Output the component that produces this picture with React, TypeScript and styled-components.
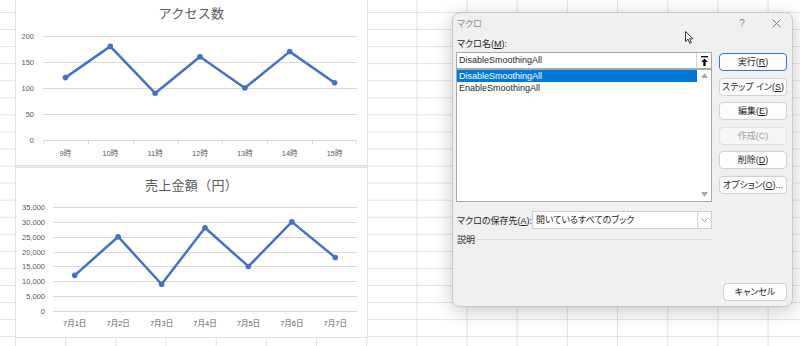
import React from "react";
import styled, { createGlobalStyle } from "styled-components";

const GlobalStyle = createGlobalStyle`
  html, body {
    margin: 0;
    padding: 0;
    background: #fff;
  }
  body {
    font-family: "Liberation Sans", "Noto Sans CJK JP", sans-serif;
  }
`;

const components = {
  Sheet: styled.div`
    position: relative;
    width: 800px;
    height: 346px;
    overflow: hidden;
    display: flex;
    align-items: flex-start;
    background-color: #fff;
    background-image: linear-gradient(to right, #e1e1e1 1px, transparent 1px),
      linear-gradient(to bottom, #e1e1e1 1px, transparent 1px);
    background-size: 50.18px 17.07px;
    background-position: 15px 12px;
  `,
  ChartColumn: styled.div`
    display: flex;
    flex-direction: column;
    gap: 1px;
    width: 353px;
    margin: -1px 0 0 15px;
  `,
  ChartCard: styled.div<{ $height: number }>`
    box-sizing: border-box;
    height: ${p => p.$height}px;
    background: #fff;
    border: 1px solid #e1e1e1;
    display: flex;
    flex-direction: column;
  `,
  ChartTitle: styled.div<{ $height: number }>`
    height: ${p => p.$height}px;
    line-height: ${p => p.$height}px;
    text-align: center;
    font-family: "Noto Sans CJK JP", sans-serif;
    font-size: 13px;
    color: #595959;
    letter-spacing: 0.3px;
  `,
  Plot: styled.svg`
    display: block;
    text {
      font-family: "Liberation Sans", "Noto Sans CJK JP", sans-serif;
      font-size: 7.5px;
      fill: #595959;
    }
  `,
  Dialog: styled.div`
    position: relative;
    box-sizing: border-box;
    width: 341px;
    height: 295px;
    margin: 12px 0 0 84px;
    background: #f0f0f0;
    border: 1px solid #c8c8c8;
    border-radius: 8px;
    box-shadow: 0 4px 18px rgba(0, 0, 0, 0.22);
    display: flex;
    flex-direction: column;
    font-family: "Liberation Sans", "Noto Sans CJK JP", sans-serif;
    font-size: 9px;
    font-feature-settings: "palt";
    color: #1f1f1f;
    white-space: nowrap;
  `,
  TitleBar: styled.div`
    height: 20px;
    display: flex;
    align-items: center;
    padding-left: 4px;
  `,
  TitleText: styled.div`
    flex: 1;
    color: #909090;
  `,
  TitleButton: styled.div<{ $width: number }>`
    width: ${p => p.$width}px;
    height: 20px;
    display: flex;
    align-items: center;
    justify-content: center;
    color: #8c8c8c;
    font-size: 10px;
  `,
  Body: styled.div`
    display: grid;
    grid-template-columns: 256px 68px;
    column-gap: 7px;
    padding: 4px 5px 0 3px;
  `,
  LeftCol: styled.div`
    display: flex;
    flex-direction: column;
  `,
  FieldLabel: styled.div`
    height: 14px;
    line-height: 14px;
    padding-left: 1px;
    margin-bottom: 1px;
  `,
  NameInput: styled.div`
    box-sizing: border-box;
    height: 17px;
    display: flex;
    background: #fff;
    border: 1px solid #a8a8a8;
  `,
  NameText: styled.div`
    flex: 1;
    line-height: 15px;
    padding-left: 2px;
  `,
  PickButton: styled.div`
    width: 14px;
    display: flex;
    align-items: center;
    justify-content: center;
    border-left: 1px solid #d6d6d6;
  `,
  ListBox: styled.div`
    box-sizing: border-box;
    height: 133px;
    display: flex;
    background: #fff;
    border: 1px solid #a8a8a8;
  `,
  ListItems: styled.div`
    flex: 1;
  `,
  ListItem: styled.div<{ $selected?: boolean }>`
    height: 12px;
    line-height: 12px;
    padding-left: 2px;
    background: ${p => (p.$selected ? "#0078d7" : "transparent")};
    color: ${p => (p.$selected ? "#fff" : "#1f1f1f")};
  `,
  ScrollBar: styled.div`
    width: 14px;
    display: flex;
    flex-direction: column;
    justify-content: space-between;
    align-items: center;
    padding: 3px 0 4px;
  `,
  StoreRow: styled.div`
    height: 18px;
    margin-top: 9px;
    display: flex;
    align-items: center;
  `,
  StoreLabel: styled.div`
    flex: 1;
    min-width: 0;
    padding-left: 1px;
  `,
  Select: styled.div`
    box-sizing: border-box;
    flex: 0 0 180px;
    height: 18px;
    display: flex;
    background: #fff;
    border: 1px solid #cfcfcf;
  `,
  SelectText: styled.div`
    flex: 1;
    line-height: 16px;
    padding-left: 3px;
  `,
  Chevron: styled.div`
    width: 13px;
    display: flex;
    align-items: center;
    justify-content: center;
    border-left: 1px solid #dadada;
  `,
  DescRow: styled.div`
    height: 14px;
    margin-top: 3px;
    display: flex;
    align-items: center;
    gap: 3px;
    padding-left: 1px;
  `,
  Rule: styled.div`
    flex: 1;
    height: 1px;
    background: #dcdcdc;
  `,
  ButtonCol: styled.div`
    display: flex;
    flex-direction: column;
    gap: 6.6px;
    padding-top: 16px;
  `,
  Button: styled.div<{ $primary?: boolean; $disabled?: boolean; $width?: number }>`
    box-sizing: border-box;
    width: ${p => (p.$width ? `${p.$width}px` : "auto")};
    height: 18px;
    line-height: 16px;
    text-align: center;
    background: ${p => (p.$disabled ? "#f6f6f6" : "#fdfdfd")};
    color: ${p => (p.$disabled ? "#a0a0a0" : "#1f1f1f")};
    border: 1px solid
      ${p => (p.$primary ? "#3178cf" : p.$disabled ? "#e0e0e0" : "#d0d0d0")};
    border-radius: 4px;
  `,
  Footer: styled.div`
    margin-top: auto;
    display: flex;
    justify-content: flex-end;
    padding: 0 5px 5px;
  `,
  Cursor: styled.svg`
    position: absolute;
    left: 232px;
    top: 18px;
  `
};

type ChartProps = {
  title: string;
  height: number;
  titleHeight: number;
  labels: string[];
  data: number[];
  max: number;
  step: number;
  plotLeft: number;
  plotRight: number;
  plotTop: number;
  plotBottom: number;
  labelRight: number;
  catLabelY: number;
  ticks?: boolean;
  format?: (v: number) => string;
};

const LINE = "#4472c4";
const GRID = "#d9d9d9";

function LineChart(p: ChartProps) {
  const svgH = p.height - 2 - p.titleHeight;
  const w = (p.plotRight - p.plotLeft) / p.labels.length;
  const yOf = (v: number) =>
    p.plotBottom - (v / p.max) * (p.plotBottom - p.plotTop);
  const fmt = p.format || (v => String(v));
  const steps: number[] = [];
  for (let v = 0; v <= p.max; v += p.step) steps.push(v);
  const pts = p.data.map((v, i) => [p.plotLeft + w * (i + 0.5), yOf(v)]);

  return (
    <components.ChartCard $height={p.height}>
      <components.ChartTitle $height={p.titleHeight}>{p.title}</components.ChartTitle>
      <components.Plot width={351} height={svgH}>
        {steps.map(v => {
          const y = Math.round(yOf(v)) + 0.5;
          return (
            <g key={v}>
              <line x1={p.plotLeft} x2={p.plotRight} y1={y} y2={y} stroke={GRID} />
              <text x={p.labelRight} y={y} textAnchor="end" dominantBaseline="central">
                {fmt(v)}
              </text>
            </g>
          );
        })}
        {p.ticks &&
          p.labels.map((_, i) => (
            <line
              key={i}
              x1={Math.round(p.plotLeft + w * i) + 0.5}
              x2={Math.round(p.plotLeft + w * i) + 0.5}
              y1={p.plotBottom}
              y2={p.plotBottom + 4}
              stroke={GRID}
            />
          ))}
        {p.ticks && (
          <line
            x1={p.plotRight - 0.5}
            x2={p.plotRight - 0.5}
            y1={p.plotBottom}
            y2={p.plotBottom + 4}
            stroke={GRID}
          />
        )}
        {p.labels.map((l, i) => (
          <text
            key={l}
            x={p.plotLeft + w * (i + 0.5)}
            y={p.catLabelY}
            textAnchor="middle"
            dominantBaseline="central"
          >
            {l}
          </text>
        ))}
        <polyline
          points={pts.map(pt => pt.join(",")).join(" ")}
          fill="none"
          stroke={LINE}
          strokeWidth={2.5}
          strokeLinejoin="round"
          strokeLinecap="round"
        />
        {pts.map(([x, y], i) => (
          <circle key={i} cx={x} cy={y} r={2.8} fill={LINE} />
        ))}
      </components.Plot>
    </components.ChartCard>
  );
}

const Key = ({ children }: { children: string }) => <u>{children}</u>;

function MacroDialog() {
  const c = components;
  return (
    <c.Dialog>
      <c.TitleBar>
        <c.TitleText>マクロ</c.TitleText>
        <c.TitleButton $width={36}>?</c.TitleButton>
        <c.TitleButton $width={32}>
          <svg width="9" height="9" viewBox="0 0 9 9">
            <path d="M0.5 0.5 L8.5 8.5 M8.5 0.5 L0.5 8.5" stroke="#7a7a7a" strokeWidth="0.9" />
          </svg>
        </c.TitleButton>
      </c.TitleBar>

      <c.Body>
        <c.LeftCol>
          <c.FieldLabel>
            マクロ名(<Key>M</Key>):
          </c.FieldLabel>
          <c.NameInput>
            <c.NameText>DisableSmoothingAll</c.NameText>
            <c.PickButton>
              <svg width="7" height="10" viewBox="0 0 7 10">
                <rect x="0" y="0" width="7" height="1.4" fill="#111" />
                <path d="M3.5 2.4 L7 6 L4.7 6 L4.7 10 L2.3 10 L2.3 6 L0 6 Z" fill="#111" />
              </svg>
            </c.PickButton>
          </c.NameInput>
          <c.ListBox>
            <c.ListItems>
              <c.ListItem $selected>DisableSmoothingAll</c.ListItem>
              <c.ListItem>EnableSmoothingAll</c.ListItem>
            </c.ListItems>
            <c.ScrollBar>
              <svg width="7" height="5" viewBox="0 0 7 5">
                <path d="M3.5 0 L7 5 L0 5 Z" fill="#a8a8a8" />
              </svg>
              <svg width="7" height="5" viewBox="0 0 7 5">
                <path d="M0 0 L7 0 L3.5 5 Z" fill="#a8a8a8" />
              </svg>
            </c.ScrollBar>
          </c.ListBox>
          <c.StoreRow>
            <c.StoreLabel>
              マクロの保存先(<Key>A</Key>):
            </c.StoreLabel>
            <c.Select>
              <c.SelectText>開いているすべてのブック</c.SelectText>
              <c.Chevron>
                <svg width="7" height="4" viewBox="0 0 7 4">
                  <path d="M0.5 0.5 L3.5 3.5 L6.5 0.5" fill="none" stroke="#8a8a8a" strokeWidth="0.9" />
                </svg>
              </c.Chevron>
            </c.Select>
          </c.StoreRow>
          <c.DescRow>
            <span>説明</span>
            <c.Rule />
          </c.DescRow>
        </c.LeftCol>

        <c.ButtonCol>
          <c.Button $primary>
            実行(<Key>R</Key>)
          </c.Button>
          <c.Button>
            ステップ イン(<Key>S</Key>)
          </c.Button>
          <c.Button>
            編集(<Key>E</Key>)
          </c.Button>
          <c.Button $disabled>作成(C)</c.Button>
          <c.Button>
            削除(<Key>D</Key>)
          </c.Button>
          <c.Button>
            オプション(<Key>O</Key>)...
          </c.Button>
        </c.ButtonCol>
      </c.Body>

      <c.Footer>
        <c.Button $width={64}>キャンセル</c.Button>
      </c.Footer>

      <c.Cursor width="9" height="13" viewBox="0 0 9 13">
        <path
          d="M0.5 0.5 L0.5 10.5 L3 8.3 L4.8 12.3 L6.3 11.6 L4.6 7.8 L8 7.8 Z"
          fill="#fff"
          stroke="#222"
          strokeWidth="0.9"
          strokeLinejoin="round"
        />
      </c.Cursor>
    </c.Dialog>
  );
}

export default function App() {
  return (
    <>
      <GlobalStyle />
      <components.Sheet>
        <components.ChartColumn>
          <LineChart
            title="アクセス数"
            height={167}
            titleHeight={26}
            labels={["9時", "10時", "11時", "12時", "13時", "14時", "15時"]}
            data={[120, 180, 90, 160, 100, 170, 110]}
            max={200}
            step={50}
            plotLeft={27}
            plotRight={341}
            plotTop={10}
            plotBottom={114}
            labelRight={18}
            catLabelY={127}
            ticks
          />
          <LineChart
            title="売上金額（円）"
            height={171}
            titleHeight={34}
            labels={["7月1日", "7月2日", "7月3日", "7月4日", "7月5日", "7月6日", "7月7日"]}
            data={[12000, 25000, 9000, 28000, 15000, 30000, 18000]}
            max={35000}
            step={5000}
            plotLeft={37}
            plotRight={341}
            plotTop={5}
            plotBottom={109}
            labelRight={29}
            catLabelY={121}
            format={v => v.toLocaleString("en-US")}
          />
        </components.ChartColumn>
        <MacroDialog />
      </components.Sheet>
    </>
  );
}
